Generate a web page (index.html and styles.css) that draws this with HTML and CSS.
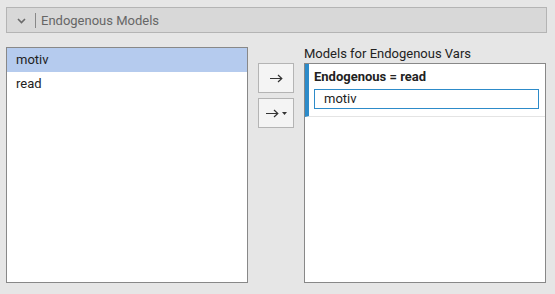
FILE: index.html
```html
<!DOCTYPE html>
<html lang="en">
<head>
    <meta charset="UTF-8">
    <title>Endogenous Models</title>
    <link rel="stylesheet" href="styles.css">
</head>
<body>
    <div class="section-header">
        <svg class="chevron" width="9" height="6" viewBox="0 0 9 6">
            <path d="M1 1 L4.5 4.5 L8 1" fill="none" stroke="#6a6a6a" stroke-width="1.6"/>
        </svg>
        <span class="divider"></span>
        <span class="section-title">Endogenous Models</span>
    </div>

    <div class="model-area">
        <div class="var-list">
            <div class="var-item selected">motiv</div>
            <div class="var-item">read</div>
        </div>

        <div class="move-buttons">
            <button class="move-btn">
                <svg width="13" height="9" viewBox="0 0 13 9">
                    <path d="M0 4.5 H12 M8 1 L11.8 4.5 L8 8" fill="none" stroke="#333" stroke-width="1.2"/>
                </svg>
            </button>
            <button class="move-btn">
                <svg width="13" height="9" viewBox="0 0 13 9">
                    <path d="M0 4.5 H12 M8 1 L11.8 4.5 L8 8" fill="none" stroke="#333" stroke-width="1.2"/>
                </svg>
                <svg class="caret" width="5" height="3" viewBox="0 0 5 3">
                    <path d="M0 0 H5 L2.5 3 Z" fill="#333"/>
                </svg>
            </button>
        </div>

        <div class="target-col">
            <div class="target-label">Models for Endogenous Vars</div>
            <div class="target-box">
                <div class="model-item">
                    <div class="model-name">Endogenous = read</div>
                    <div class="model-input">motiv</div>
                </div>
            </div>
        </div>
    </div>
</body>
</html>
```

FILE: styles.css
```css
body {
    margin: 0;
    background-color: #e6e6e6;
    font-family: Roboto, "Liberation Sans", sans-serif;
    font-size: 13px;
    color: #222;
}

.section-header {
    display: flex;
    align-items: center;
    height: 24px;
    margin: 7px 8px 0 6px;
    background-color: #d8d8d8;
    border: 1px solid #b4b4b4;
}

.chevron {
    margin-left: 10px;
    margin-top: 2px;
}

.divider {
    width: 1px;
    height: 15px;
    background-color: #888;
    margin: 0 5px 0 9px;
}

.section-title {
    color: #666;
}

.model-area {
    display: grid;
    grid-template-columns: 242px 36px 242px;
    column-gap: 10px;
    margin: 14px 0 0 6px;
}

.var-list {
    height: 234px;
    background-color: #fff;
    border: 1px solid #888;
}

.var-item {
    height: 24px;
    line-height: 24px;
    padding-left: 9px;
}

.var-item.selected {
    background-color: #b5cbee;
}

.move-buttons {
    display: flex;
    flex-direction: column;
    gap: 5px;
    padding-top: 16px;
}

.move-btn {
    display: flex;
    align-items: center;
    justify-content: center;
    width: 36px;
    height: 30px;
    padding: 0;
    background-color: #f4f4f4;
    border: 1px solid #b4b4b4;
}

.caret {
    margin-left: 3px;
}

.target-col {
    display: flex;
    flex-direction: column;
}

.target-label {
    height: 16px;
    line-height: 14px;
}

.target-box {
    height: 218px;
    background-color: #fff;
    border: 1px solid #888;
}

.model-item {
    border-left: 4px solid #2d8bc9;
    border-bottom: 1px solid #e4e4e4;
    padding: 3px 6px 7px 5px;
}

.model-name {
    font-weight: bold;
    height: 19px;
    line-height: 19px;
}

.model-input {
    height: 18px;
    line-height: 18px;
    margin-top: 3px;
    padding-left: 9px;
    border: 1px solid #2d8bc9;
}
```
